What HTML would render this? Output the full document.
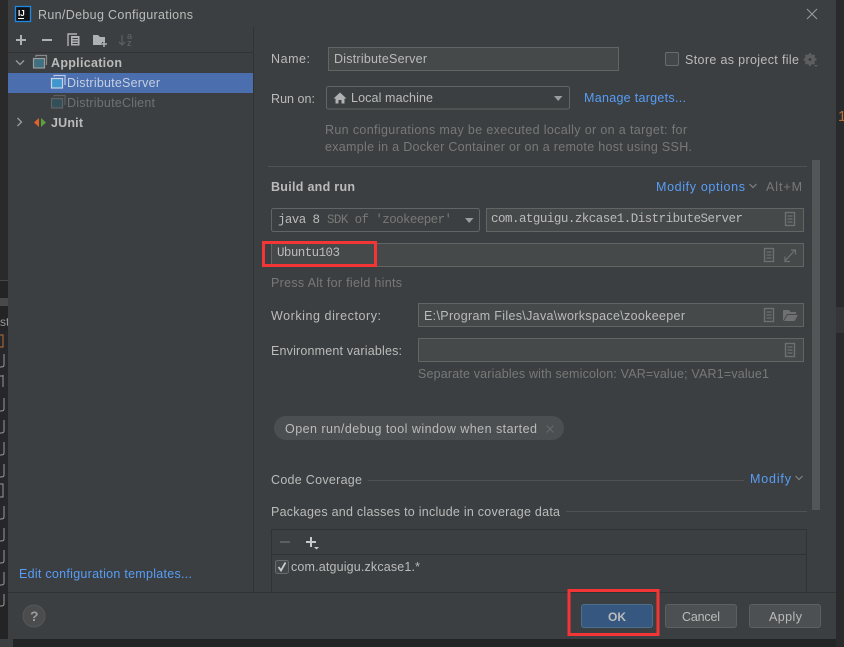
<!DOCTYPE html>
<html><head><meta charset="utf-8"><title>Run/Debug Configurations</title>
<style>
html,body{margin:0;padding:0;background:#232425;width:844px;height:647px;overflow:hidden}
svg{display:block}
text{font-family:"Liberation Sans",sans-serif;font-size:12.5px;fill:#bbbbbb;white-space:pre}
.m{font-family:"Liberation Mono",monospace;font-size:12.5px}
.g{fill:#787878}
.l{fill:#589df6}
.b{font-weight:bold}
</style></head><body>
<svg width="844" height="647" viewBox="0 0 844 647" xmlns="http://www.w3.org/2000/svg">
<defs>
<g id="doc"><rect x="-4.500" y="-6.500" width="9" height="13" fill="none" stroke="#6e7072" stroke-width="1.400"/><path d="M-2.500-3H2.500M-2.500 0H2.500M-2.500 3H2.500" stroke="#6e7072" stroke-width="1.200" fill="none"/></g>
<path id="chev" d="M-3.500-2L0 1.500L3.500-2" fill="none" stroke="#7f8183" stroke-width="1.200"/>
</defs>
<!-- background -->
<rect width="844" height="647" fill="#232425"/>
<rect x="0" y="0" width="8" height="280" fill="#2a2a2b"/>
<rect x="0" y="280" width="8" height="1" fill="#454749"/>
<rect x="0" y="298" width="8" height="8" fill="#47494b"/>
<rect x="0" y="331" width="8" height="270" fill="#26272a"/>
<rect x="0" y="639" width="13" height="8" fill="#3c3f41"/>
<rect x="836" y="0" width="8" height="647" fill="#292a2b"/>
<rect x="836" y="307" width="8" height="26" fill="#343638"/>
<text x="838" y="121" style="fill:#b5703a;font-size:15px">1</text>
<text x="0" y="326" style="font-size:12px;fill:#999">st</text>
<g fill="none" stroke="#9a9a9a" stroke-width="1">
<path d="M0 335H3V347H0" stroke="#b5703a"/>
<path d="M4 354V365Q4 367 1 367H0M4 398V409Q4 411 1 411H0M4 420V431Q4 433 1 433H0M4 442V453Q4 455 1 455H0M4 464V475Q4 477 1 477H0M4 506V517Q4 519 1 519H0M4 528V539Q4 541 1 541H0M4 550V561Q4 563 1 563H0M4 572V583Q4 585 1 585H0M4 594V604Q4 606 1 606H0"/>
<path d="M3 375V387M0 376H3M0 484H3V497H0" />
</g>
<!-- dialog -->
<rect x="8" y="0" width="828" height="639" fill="#3c3f41"/>
<!-- title -->
<rect x="15.500" y="6.500" width="15" height="15" fill="#101214" stroke="#1e88e5" stroke-width="1.300"/>
<text x="18" y="16" style="font-size:8px;font-weight:bold;fill:#fff">IJ</text>
<rect x="18" y="18" width="6" height="1" fill="#fff"/>
<text x="38" y="19" textLength="155" lengthAdjust="spacing">Run/Debug Configurations</text>
<path d="M807 9L817 19M817 9L807 19" stroke="#9b9d9f" stroke-width="1"/>
<rect x="253" y="27" width="1" height="565" fill="#323232"/>
<!-- toolbar -->
<rect x="8" y="52" width="245" height="1" fill="#323232"/>
<path d="M21 35V45M16 40H26" stroke="#afb1b3" stroke-width="2"/>
<path d="M42 40H52" stroke="#afb1b3" stroke-width="2"/>
<path d="M68 46V34H77" fill="none" stroke="#afb1b3" stroke-width="1.400"/>
<rect x="71" y="36" width="8.500" height="9.500" fill="#afb1b3"/>
<path d="M72.500 38.500H78M72.500 41H78M72.500 43.500H78" stroke="#3c3f41"/>
<path d="M93 35H98L100 37H105V45H93Z" fill="#afb1b3"/>
<path d="M104 42V48M101 45H107" stroke="#3c3f41" stroke-width="4"/>
<path d="M104 41V47M101 44H107" stroke="#afb1b3" stroke-width="1.500"/>
<path d="M122 35V45M119 42L122 45L125 42" fill="none" stroke="#5c5e60" stroke-width="1.300"/>
<text x="127" y="39" style="font-size:9px;font-weight:bold;fill:#5c5e60">a</text>
<text x="127" y="46" style="font-size:9px;font-weight:bold;fill:#5c5e60">z</text>
<!-- tree -->
<rect x="8" y="73" width="245" height="20" fill="#4b6eaf"/>
<path d="M16 60.500L20 64.500L24 60.500" fill="none" stroke="#9a9c9e" stroke-width="1.300"/>
<path d="M36 57V55.500H46.500V65" fill="none" stroke="#87898b" stroke-width="1.200"/>
<rect x="33.500" y="58.500" width="11" height="9.500" fill="#40707f" stroke="#9a9c9e" stroke-width="1.200"/>
<text x="51" y="67" class="b" textLength="71" lengthAdjust="spacing">Application</text>
<path d="M54 76.500V75.500H65V85" fill="none" stroke="#b9cbe4" stroke-width="1.200"/>
<rect x="51.500" y="78.500" width="11" height="9.500" fill="#3f97ce" stroke="#c7d3e6" stroke-width="1.200"/>
<text x="67" y="87" textLength="93" lengthAdjust="spacing" style="fill:#c4cfe0">DistributeServer</text>
<path d="M54 96.500V95.500H65V105" fill="none" stroke="#5c5e60" stroke-width="1.200"/>
<rect x="51.500" y="98.500" width="11" height="9.500" fill="#33505a" stroke="#5f6163" stroke-width="1.200"/>
<text x="67" y="107" textLength="88" lengthAdjust="spacing" style="fill:#6f7173">DistributeClient</text>
<path d="M17.500 118L21.500 122L17.500 126" fill="none" stroke="#9a9c9e" stroke-width="1.300"/>
<path d="M39 118V127L34 122.500Z" fill="#e4622a"/>
<path d="M41 118V127L46 122.500Z" fill="#5aa13f"/>
<text x="51" y="127" class="b" textLength="32" lengthAdjust="spacing">JUnit</text>
<text x="19" y="578" class="l" textLength="173" lengthAdjust="spacing">Edit configuration templates...</text>
<!-- name -->
<text x="271" y="63" textLength="39" lengthAdjust="spacing">Name:</text>
<rect x="328.500" y="47.500" width="290" height="23" fill="#45494a" stroke="#646464"/>
<text x="334" y="63" textLength="93" lengthAdjust="spacing">DistributeServer</text>
<rect x="665.500" y="52.500" width="13" height="13" rx="1.500" fill="#43474a" stroke="#6b6b6b"/>
<text x="685" y="64" textLength="114" lengthAdjust="spacing">Store as project file</text>
<circle cx="810" cy="59.500" r="3.800" fill="#5c5e60" stroke="#5c5e60" stroke-width="3"/>
<path d="M810 53V66M803.500 59.500H816.500M805.500 55L814.500 64M814.500 55L805.500 64" stroke="#5c5e60" stroke-width="2"/>
<circle cx="810" cy="59.500" r="1.500" fill="#3c3f41"/>
<path d="M814 65H818L816 67Z" fill="#5c5e60"/>
<!-- run on -->
<text x="271" y="103" textLength="44" lengthAdjust="spacing">Run on:</text>
<rect x="326.500" y="86.500" width="243" height="22.500" rx="2" fill="#3c3f41" stroke="#646464"/>
<path d="M340 92.500L346.500 98.500H344.500V103.500H341.500V100H338.500V103.500H335.500V98.500H333.500Z" fill="#afb1b3"/>
<text x="351" y="102" textLength="82" lengthAdjust="spacing">Local machine</text>
<path d="M554 96H562.500L558.200 101Z" fill="#9a9c9e"/>
<text x="584" y="102" class="l" textLength="102" lengthAdjust="spacing">Manage targets...</text>
<text x="325" y="134" class="g" textLength="362" lengthAdjust="spacing">Run configurations may be executed locally or on a target: for</text>
<text x="325" y="151" class="g" textLength="367" lengthAdjust="spacing">example in a Docker Container or on a remote host using SSH.</text>
<rect x="268" y="166" width="539" height="1" fill="#515151"/>
<rect x="812" y="160" width="8" height="350" fill="#535557"/>
<!-- build and run -->
<text x="271" y="191" class="b" textLength="84" lengthAdjust="spacing">Build and run</text>
<text x="656" y="191" class="l" textLength="89" lengthAdjust="spacing">Modify options</text>
<use href="#chev" x="753" y="186"/>
<text x="766" y="191" class="g" textLength="36" lengthAdjust="spacing">Alt+M</text>
<rect x="271.500" y="208.500" width="208" height="23" rx="2" fill="#3c3f41" stroke="#646464"/>
<text x="278" y="223" class="m" textLength="42" lengthAdjust="spacing">java 8</text>
<text x="327" y="223" class="m g" textLength="125" lengthAdjust="spacing">SDK of 'zookeeper'</text>
<path d="M465 218H473.500L469.200 223Z" fill="#9a9c9e"/>
<rect x="486.500" y="208.500" width="317" height="23" fill="#45494a" stroke="#646464"/>
<text x="491" y="222" class="m" textLength="252" lengthAdjust="spacing">com.atguigu.zkcase1.DistributeServer</text>
<use href="#doc" x="790" y="219"/>
<rect x="271.500" y="243.500" width="532" height="23" fill="#45494a" stroke="#646464"/>
<text x="277" y="256" class="m" textLength="63" lengthAdjust="spacing">Ubuntu103</text>
<use href="#doc" x="769" y="255"/>
<path d="M785 261L795 250M791 250H795.500V254.500M785 256.500V261.500H790" fill="none" stroke="#6e7072" stroke-width="1.200"/>
<text x="271" y="287" class="g" textLength="131" lengthAdjust="spacing">Press Alt for field hints</text>
<!-- working dir -->
<text x="271" y="320" textLength="110" lengthAdjust="spacing">Working directory:</text>
<rect x="418.500" y="303.500" width="385" height="23" fill="#45494a" stroke="#646464"/>
<text x="424" y="320" textLength="261" lengthAdjust="spacing">E:\Program Files\Java\workspace\zookeeper</text>
<use href="#doc" x="769" y="315"/>
<path d="M783 310H789L790.500 312H796V314H787L783 321Z" fill="#6e7072"/>
<path d="M787.500 315H798L794.500 321H784Z" fill="#6e7072"/>
<text x="271" y="355" textLength="131" lengthAdjust="spacing">Environment variables:</text>
<rect x="418.500" y="338.500" width="385" height="23" fill="#45494a" stroke="#646464"/>
<use href="#doc" x="790" y="350"/>
<text x="418" y="378" class="g" textLength="351" lengthAdjust="spacing">Separate variables with semicolon: VAR=value; VAR1=value1</text>
<!-- chip -->
<rect x="274" y="416" width="290" height="24" rx="12" fill="#4c4f51"/>
<text x="285" y="433" textLength="252" lengthAdjust="spacing">Open run/debug tool window when started</text>
<path d="M546.500 425.500L553.500 432.500M553.500 425.500L546.500 432.500" stroke="#66686a" stroke-width="1.100"/>
<!-- coverage -->
<text x="271" y="484" textLength="91" lengthAdjust="spacing">Code Coverage</text>
<rect x="368" y="480" width="376" height="1" fill="#515151"/>
<text x="750" y="483" class="l" textLength="41" lengthAdjust="spacing">Modify</text>
<use href="#chev" x="799" y="478"/>
<text x="271" y="516" textLength="289" lengthAdjust="spacing">Packages and classes to include in coverage data</text>
<rect x="566" y="511" width="241" height="1" fill="#515151"/>
<path d="M271.500 592V529.500H806.500V592" fill="none" stroke="#323232"/>
<rect x="272" y="554" width="534" height="1" fill="#323232"/>
<path d="M280 542H290" stroke="#5c5e60" stroke-width="2"/>
<path d="M311 537V547M306 542H316" stroke="#c8cacc" stroke-width="2"/>
<path d="M314 547H319L316.500 549.500Z" fill="#c8cacc"/>
<rect x="275.500" y="560.500" width="13" height="13" rx="2" fill="#43474a" stroke="#6b6b6b"/>
<path d="M278.500 567L281 570.500L285.500 562.500" fill="none" stroke="#c8cacc" stroke-width="1.800"/>
<text x="291" y="571" textLength="129" lengthAdjust="spacing">com.atguigu.zkcase1.*</text>
<rect x="8" y="592" width="828" height="47" fill="#3c3f41"/>
<rect x="8" y="592" width="828" height="1" fill="#323232"/>
<circle cx="34" cy="616" r="11" fill="#4a4c4e" stroke="#555759"/>
<text x="30" y="621" style="font-size:14px;font-weight:bold;fill:#9a9c9e">?</text>
<!-- buttons -->
<rect x="581.500" y="604.500" width="71" height="23" rx="2.500" fill="#365880" stroke="#4c708c"/>
<text x="608" y="621" class="b" style="font-size:12px" textLength="18" lengthAdjust="spacing">OK</text>
<rect x="665.500" y="604.500" width="71" height="23" rx="2.500" fill="#4c5052" stroke="#5e6060"/>
<text x="682" y="621" textLength="38" lengthAdjust="spacing">Cancel</text>
<rect x="749.500" y="604.500" width="71" height="23" rx="2.500" fill="#4c5052" stroke="#5e6060"/>
<text x="769" y="621" textLength="33" lengthAdjust="spacing">Apply</text>
<!-- red annotation boxes -->
<rect x="263.500" y="242.500" width="112" height="23" fill="none" stroke="#f43535" stroke-width="3"/>
<rect x="569" y="590.500" width="89" height="44" fill="none" stroke="#f43535" stroke-width="3"/>
</svg>
</body></html>
